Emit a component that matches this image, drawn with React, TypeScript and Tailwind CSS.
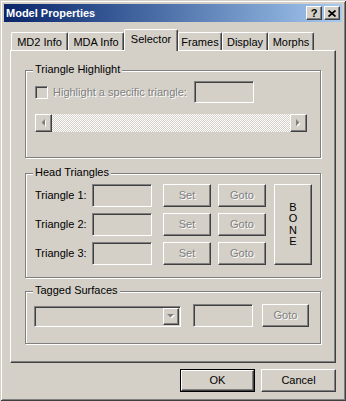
import React from 'react';

const raised =
  'border border-t-white border-l-white border-r-[#404040] border-b-[#404040] shadow-[inset_-1px_-1px_#808080]';
const sunken =
  'border border-t-[#808080] border-l-[#808080] border-r-white border-b-white shadow-[inset_1px_1px_#404040,inset_-1px_-1px_#d4d0c8]';
const greyText = 'text-[#808080] [text-shadow:1px_1px_0_#fff]';

type BtnProps = {
  label: React.ReactNode;
  className?: string;
  disabled?: boolean;
};

const Button: React.FC<BtnProps> = ({ label, className = '', disabled }) => (
  <div className={`${raised} bg-[#d4d0c8] flex items-center justify-center ${disabled ? greyText : 'text-black'} ${className}`}>
    {label}
  </div>
);

const Group: React.FC<{ title: string; className?: string; children?: React.ReactNode }> = ({
  title,
  className = '',
  children
}) => (
  <div className={`relative border border-[#808080] shadow-[inset_1px_1px_#fff,1px_1px_#fff] ${className}`}>
    <span className="absolute left-[7px] top-[-8px] bg-[#d4d0c8] px-[2px] leading-[13px] whitespace-nowrap">{title}</span>
    {children}
  </div>
);

const Arrow: React.FC<{ dir: 'left' | 'right' | 'down' }> = ({ dir }) => {
  const pts =
    dir === 'left' ? '4,0 4,7 0.5,3.5' : dir === 'right' ? '0,0 0,7 3.5,3.5' : '0,0 7,0 3.5,3.5';
  const w = dir === 'down' ? 8 : 5;
  const h = dir === 'down' ? 5 : 8;
  return (
    <svg width={w} height={h} viewBox={`0 0 ${w} ${h}`}>
      <g transform="translate(1,1)">
        <polygon points={pts} fill="#ffffff" />
      </g>
      <polygon points={pts} fill="#808080" />
    </svg>
  );
};

const tabs = [
  { label: 'MD2 Info', w: 'w-[57px]' },
  { label: 'MDA Info', w: 'w-[56px]' },
  { label: 'Selector', w: 'w-[54px]', active: true },
  { label: 'Frames', w: 'w-[44px]' },
  { label: 'Display', w: 'w-[46px]' },
  { label: 'Morphs', w: 'w-[46px]' }
];

export default function App() {
  return (
    <div className="w-[346px] h-[401px] bg-[#d4d0c8] p-[4px] flex flex-col text-[11px] leading-[13px] text-black font-['Liberation_Sans',Arial,sans-serif] shadow-[inset_1px_1px_#d4d0c8,inset_-1px_-1px_#404040,inset_2px_2px_#fff,inset_-2px_-2px_#808080]">
      {/* Title bar */}
      <div className="h-[18px] shrink-0 flex items-center pl-[2px] pr-[2px] bg-linear-to-r from-[#0a246a] to-[#a6caf0]">
        <span className="text-white font-bold text-[11px]">Model Properties</span>
        <div className="ml-auto flex gap-[2px]">
          <div className={`${raised} bg-[#d4d0c8] w-[16px] h-[14px] flex items-center justify-center font-bold text-[11px] leading-none`}>
            ?
          </div>
          <div className={`${raised} bg-[#d4d0c8] w-[16px] h-[14px] flex items-center justify-center`}>
            <svg width="8" height="7" viewBox="0 0 8 7">
              <path d="M0.5 0.5L7.5 6.5M7.5 0.5L0.5 6.5" stroke="#000" strokeWidth="1.7" />
            </svg>
          </div>
        </div>
      </div>

      {/* Tab control */}
      <div className="mt-[7px] mx-[6px] flex flex-col">
        <div className="h-[21px] flex items-end pl-[1px]">
          {tabs.map((t) =>
            t.active ? (
              <div
                key={t.label}
                className={`${t.w} h-[22px] -mb-[1px] relative z-10 bg-[#d4d0c8] border-l border-t border-r border-l-white border-t-white border-r-[#404040] shadow-[inset_-1px_0_#808080] rounded-t-[2px] flex justify-center pt-[3px]`}
              >
                {t.label}
              </div>
            ) : (
              <div
                key={t.label}
                className={`${t.w} h-[18px] bg-[#d4d0c8] border-l border-t border-r border-l-white border-t-white border-r-[#404040] shadow-[inset_-1px_0_#808080] rounded-t-[2px] flex justify-center pt-[3px]`}
              >
                {t.label}
              </div>
            )
          )}
        </div>

        <div className={`${raised} h-[313px] px-[14px] pt-[19px] flex flex-col`}>
          {/* Triangle Highlight */}
          <Group title="Triangle Highlight" className="h-[88px]">
            <div className="flex items-center h-[22px] mt-[10px] pl-[9px]">
              <div className={`${sunken} w-[13px] h-[13px] bg-[#d4d0c8]`} />
              <span className={`ml-[5px] w-[141px] ${greyText}`}>Highlight a specific triangle:</span>
              <div className={`${sunken} w-[60px] h-[22px] bg-[#d4d0c8]`} />
            </div>
            <div className="mt-[11px] ml-[9px] w-[272px] h-[18px] flex bg-[image:repeating-conic-gradient(#ffffff_0%_25%,#d4d0c8_0%_50%)] bg-[length:2px_2px]">
              <div className={`${raised} bg-[#d4d0c8] w-[17px] h-full flex items-center justify-center`}>
                <Arrow dir="left" />
              </div>
              <div className="flex-1" />
              <div className={`${raised} bg-[#d4d0c8] w-[17px] h-full flex items-center justify-center`}>
                <Arrow dir="right" />
              </div>
            </div>
          </Group>

          {/* Head Triangles */}
          <Group title="Head Triangles" className="h-[105px] mt-[15px]">
            <div className="flex pt-[10px] pl-[9px]">
              <div className="flex flex-col gap-[6px]">
                {[1, 2, 3].map((n) => (
                  <div key={n} className="flex items-center h-[23px]">
                    <span className="w-[57px]">Triangle {n}:</span>
                    <div className={`${sunken} w-[60px] h-[23px] bg-[#d4d0c8]`} />
                    <Button label="Set" disabled className="ml-[11px] w-[48px] h-[23px]" />
                    <Button label="Goto" disabled className="ml-[7px] w-[48px] h-[23px]" />
                  </div>
                ))}
              </div>
              <Button
                label={
                  <span className="flex flex-col items-center leading-[11.5px]">
                    <span>B</span>
                    <span>O</span>
                    <span>N</span>
                    <span>E</span>
                  </span>
                }
                className="ml-[8px] w-[38px] h-[81px]"
              />
            </div>
          </Group>

          {/* Tagged Surfaces */}
          <Group title="Tagged Surfaces" className="h-[53px] mt-[13px]">
            <div className="flex items-end pt-[12px] pl-[8px]">
              <div className={`${sunken} w-[147px] h-[21px] bg-[#d4d0c8] flex justify-end p-[1px]`}>
                <div className={`${raised} bg-[#d4d0c8] w-[16px] h-full flex items-center justify-center`}>
                  <Arrow dir="down" />
                </div>
              </div>
              <div className={`${sunken} ml-[12px] w-[60px] h-[23px] bg-[#d4d0c8]`} />
              <Button label="Goto" disabled className="ml-[9px] w-[47px] h-[23px]" />
            </div>
          </Group>
        </div>
      </div>

      {/* Dialog buttons */}
      <div className="mt-[6px] mr-[6px] flex justify-end gap-[6px]">
        <div className="border border-black w-[75px] h-[23px] flex">
          <Button label="OK" className="flex-1" />
        </div>
        <Button label="Cancel" className="w-[75px] h-[23px]" />
      </div>
    </div>
  );
}
